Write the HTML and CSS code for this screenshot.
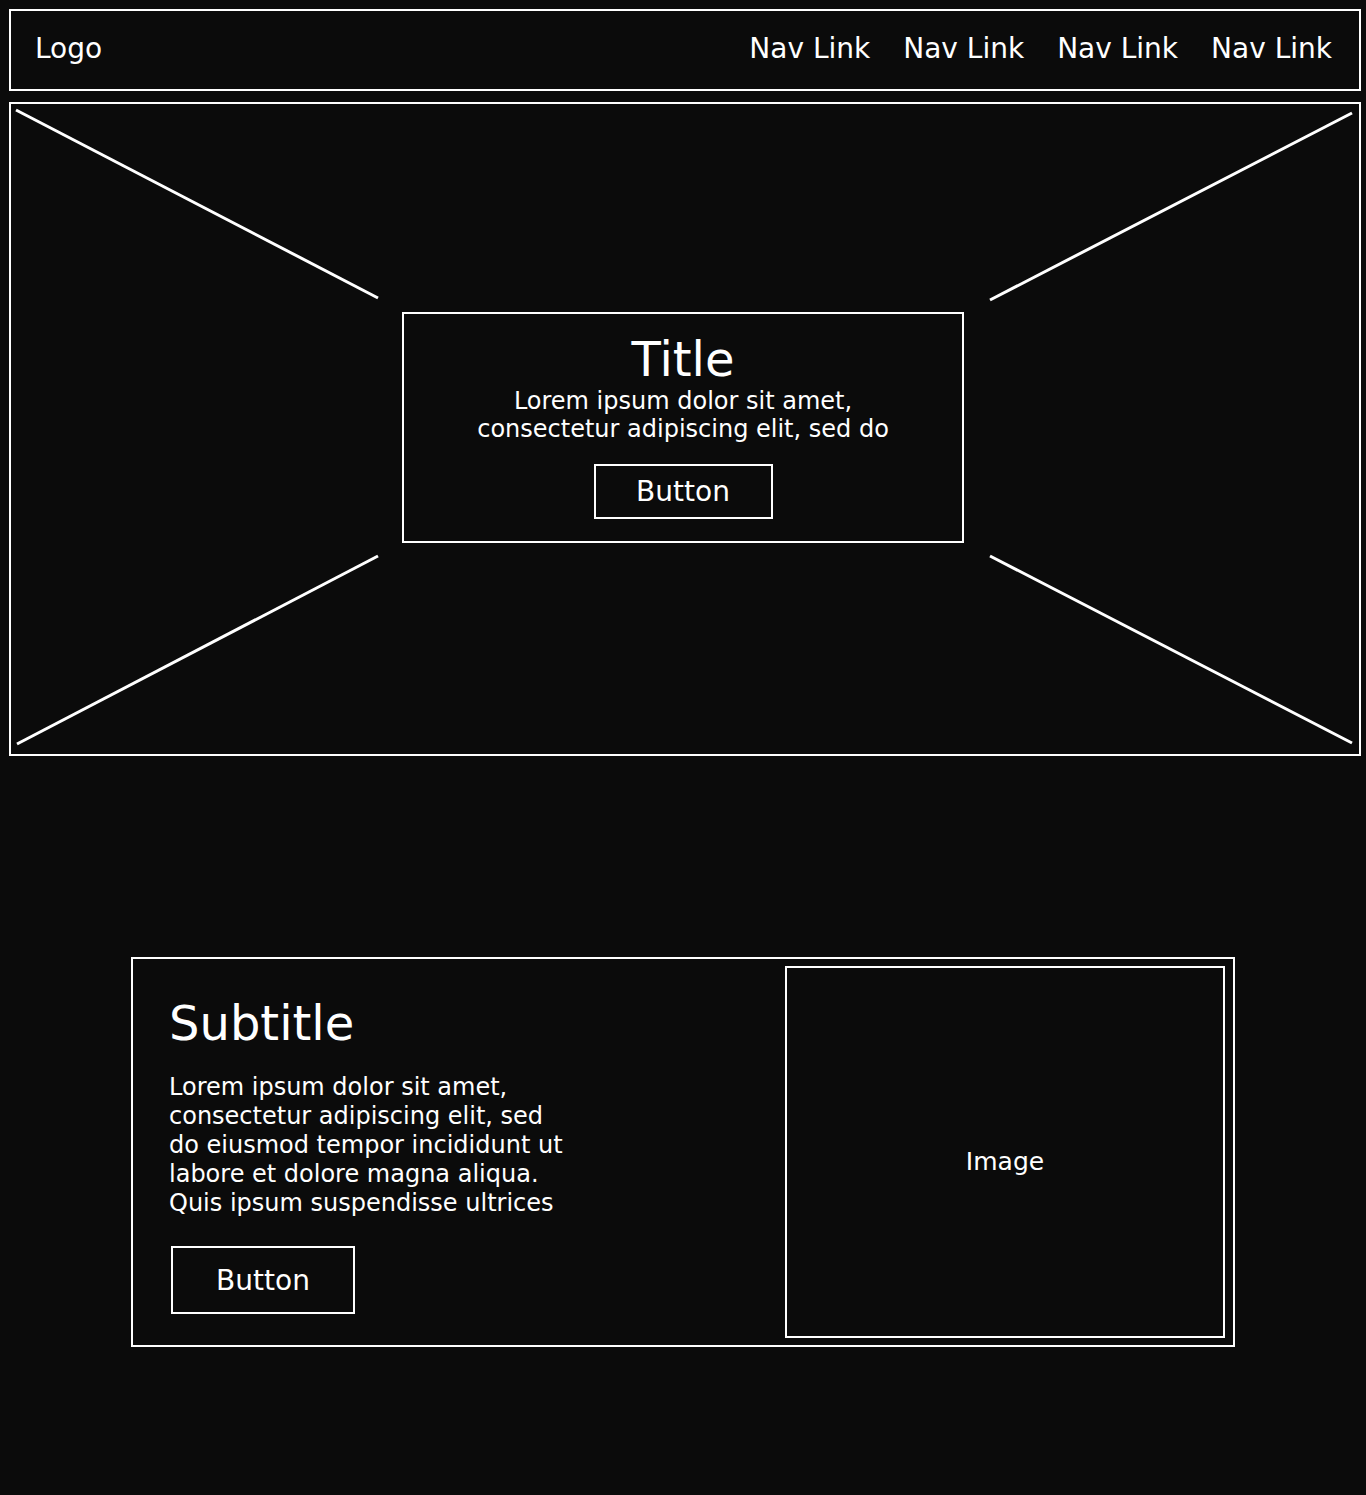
FILE: index.html
```html
<!DOCTYPE html>
<html lang="en">
<head>
    <meta charset="UTF-8">
    <meta name="viewport" content="width=device-width, initial-scale=1.0">
    <title>Wireframe</title>
    <link rel="stylesheet" href="styles.css">
</head>
<body>
    <nav class="navbar">
        <div class="logo">Logo</div>
        <div class="nav-links">
            <a href="#">Nav Link</a>
            <a href="#">Nav Link</a>
            <a href="#">Nav Link</a>
            <a href="#">Nav Link</a>
        </div>
    </nav>

    <!-- Hero з placeholder-хрестом -->
    <section class="hero">
        <svg class="hero-cross" width="1352" height="650" viewBox="0 0 1352 650">
            <line x1="5" y1="6" x2="367" y2="194" />
            <line x1="1341" y1="9" x2="979" y2="196" />
            <line x1="367" y1="452" x2="6" y2="640" />
            <line x1="979" y1="452" x2="1341" y2="639" />
        </svg>
        <div class="hero-box">
            <h1>Title</h1>
            <p>Lorem ipsum dolor sit amet, consectetur adipiscing elit, sed do</p>
            <a href="#" class="button button-small">Button</a>
        </div>
    </section>

    <section class="feature">
        <div class="feature-text">
            <h2>Subtitle</h2>
            <p>Lorem ipsum dolor sit amet, consectetur adipiscing elit, sed do eiusmod tempor incididunt ut labore et dolore magna aliqua. Quis ipsum suspendisse ultrices</p>
            <a href="#" class="button button-large">Button</a>
        </div>
        <div class="feature-image">Image</div>
    </section>
</body>
</html>
```

FILE: styles.css
```css
body {
    font-family: "DejaVu Sans", "Noto Sans", sans-serif;
    background-color: #0b0b0b;
    color: #ffffff;
    margin: 0;
    padding: 9px 5px 0 9px;
    min-height: 1495px;
    box-sizing: border-box;
}

a {
    color: #ffffff;
    text-decoration: none;
}

.navbar {
    display: flex;
    justify-content: space-between;
    align-items: center;
    height: 82px;
    box-sizing: border-box;
    border: 2px solid #ffffff;
    padding: 0 27px 4px 24px;
    font-size: 28px;
}

.nav-links {
    display: flex;
    gap: 33px;
}

.hero {
    position: relative;
    display: flex;
    justify-content: center;
    align-items: center;
    height: 654px;
    box-sizing: border-box;
    margin-top: 11px;
    border: 2px solid #ffffff;
}

.hero-cross {
    position: absolute;
    left: 0;
    top: 0;
}

.hero-cross line {
    stroke: #ffffff;
    stroke-width: 3;
}

.hero-box {
    position: relative;
    width: 562px;
    box-sizing: border-box;
    border: 2px solid #ffffff;
    padding: 17px 20px 22px;
    margin: 0 4px 4px 0;
    text-align: center;
}

.hero-box h1 {
    margin: 0;
    font-size: 48px;
    font-weight: normal;
    line-height: 56px;
}

.hero-box p {
    max-width: 440px;
    margin: 0 auto;
    font-size: 24px;
    line-height: 28px;
}

.button {
    display: inline-flex;
    justify-content: center;
    align-items: center;
    box-sizing: border-box;
    border: 2px solid #ffffff;
    font-size: 28px;
}

.button-small {
    width: 179px;
    height: 55px;
    margin-top: 21px;
}

.button-large {
    width: 184px;
    height: 68px;
    margin-top: 28px;
    margin-left: 2px;
}

.feature {
    display: flex;
    justify-content: space-between;
    align-items: center;
    width: 1104px;
    height: 390px;
    box-sizing: border-box;
    margin: 201px 0 0 122px;
    padding: 7px 8px 7px 36px;
    border: 2px solid #ffffff;
}

.feature-text {
    margin-top: 5px;
}

.feature-text h2 {
    margin: 0;
    font-size: 48px;
    font-weight: normal;
    line-height: 56px;
}

.feature-text p {
    max-width: 410px;
    margin: 22px 0 0;
    font-size: 24px;
    line-height: 29px;
}

.feature-image {
    display: flex;
    justify-content: center;
    align-items: center;
    width: 440px;
    height: 372px;
    box-sizing: border-box;
    border: 2px solid #ffffff;
    padding-top: 18px;
    font-size: 25px;
}
```
